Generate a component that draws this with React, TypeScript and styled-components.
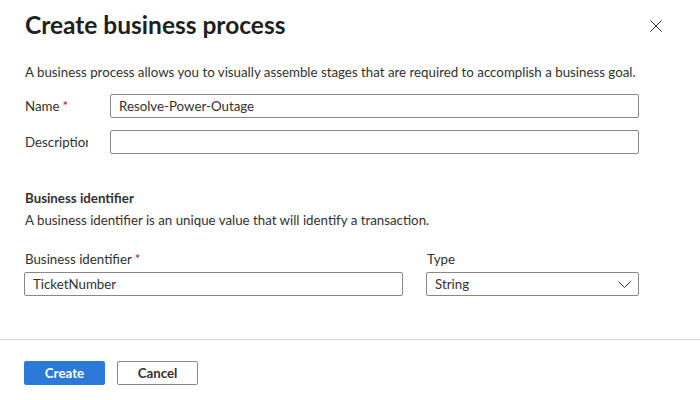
import { createGlobalStyle, styled } from "styled-components";

const GlobalStyle = createGlobalStyle`
  html, body {
    margin: 0;
    padding: 0;
    background: #ffffff;
  }
  body {
    font-family: "Segoe UI", Lato, "Noto Sans", sans-serif;
    color: #323130;
  }
`;

const Panel = styled.div`
  width: 700px;
  height: 400px;
  display: flex;
  flex-direction: column;
  background: #ffffff;
`;

const Header = styled.div`
  display: flex;
  justify-content: space-between;
  align-items: flex-start;
  height: 52px;
  padding: 9px 38px 0 25px;
  box-sizing: border-box;
`;

const Title = styled.h1`
  margin: 0;
  font-size: 24.5px;
  font-weight: 700;
  line-height: 32px;
  color: #201f1e;
`;

const CloseButton = styled.button`
  border: none;
  background: none;
  padding: 0;
  margin-top: 11px;
  width: 12px;
  height: 12px;
  display: flex;
  cursor: pointer;
`;

const Body = styled.div`
  flex: 1;
  padding: 11px 61px 0 25px;
  display: flex;
  flex-direction: column;
  font-size: 13.3px;
`;

const Intro = styled.p`
  margin: 0 0 13px;
  line-height: 18px;
  white-space: nowrap;
`;

const FieldRow = styled.div`
  display: grid;
  grid-template-columns: 85px 1fr;
  align-items: center;
  margin-right: -2px;
  margin-bottom: 12px;
  padding-right: 2px;
`;

// the reference cuts this label off at the column edge
const SideLabel = styled.label`
  width: 63px;
  overflow: hidden;
  white-space: nowrap;
`;

const Required = styled.span`
  color: #a4262c;
  margin-left: 3px;
`;

const TextBox = styled.div`
  height: 24px;
  box-sizing: border-box;
  border: 1px solid #8a8886;
  border-radius: 2px;
  display: flex;
  align-items: center;
  padding: 0 8px;
`;

const SectionTitle = styled.h2`
  margin: 22px 0 0;
  font-size: 13.3px;
  font-weight: 700;
  line-height: 20px;
`;

const SectionText = styled.p`
  margin: 3px 0 0;
  line-height: 18px;
`;

const IdGrid = styled.div`
  display: grid;
  grid-template-columns: 379px 213px;
  column-gap: 23px;
  margin: 21px 0 0 -1px;
`;

const TopLabel = styled.label`
  display: block;
  line-height: 18px;
  margin-bottom: 4px;
  padding-left: 1px;
`;

const SelectBox = styled(TextBox)`
  justify-content: space-between;
  padding-right: 7px;
`;

const Footer = styled.div`
  border-top: 1px solid #dcdcdc;
  height: 61px;
  padding: 21px 24px 0;
  box-sizing: border-box;
  display: flex;
  gap: 12px;
  align-items: flex-start;
`;

const Button = styled.button<{ $primary?: boolean }>`
  width: 81px;
  height: 24px;
  box-sizing: border-box;
  border-radius: 2px;
  font-family: "Segoe UI", Lato, "Noto Sans", sans-serif;
  font-size: 13.3px;
  font-weight: 700;
  padding: 0;
  cursor: pointer;
  border: 1px solid ${(p) => (p.$primary ? "#2b79d8" : "#8a8886")};
  background: ${(p) => (p.$primary ? "#2b79d8" : "#ffffff")};
  color: ${(p) => (p.$primary ? "#ffffff" : "#323130")};
`;

export default function App() {
  return (
    <Panel>
      <GlobalStyle />
      <Header>
        <Title>Create business process</Title>
        <CloseButton aria-label="Close">
          <svg width="12" height="12" viewBox="0 0 12 12">
            <path d="M0.5 0.5 L11.5 11.5 M11.5 0.5 L0.5 11.5" stroke="#323130" strokeWidth="1" />
          </svg>
        </CloseButton>
      </Header>
      <Body>
        <Intro>
          A business process allows you to visually assemble stages that are required to
          accomplish a business goal.
        </Intro>
        <FieldRow>
          <SideLabel>
            Name<Required>*</Required>
          </SideLabel>
          <TextBox>Resolve-Power-Outage</TextBox>
        </FieldRow>
        <FieldRow>
          <SideLabel>Description</SideLabel>
          <TextBox />
        </FieldRow>
        <SectionTitle>Business identifier</SectionTitle>
        <SectionText>
          A business identifier is an unique value that will identify a transaction.
        </SectionText>
        <IdGrid>
          <div>
            <TopLabel>
              Business identifier<Required>*</Required>
            </TopLabel>
            <TextBox>TicketNumber</TextBox>
          </div>
          <div>
            <TopLabel>Type</TopLabel>
            <SelectBox>
              String
              <svg width="13" height="7" viewBox="0 0 13 7">
                <path d="M0.5 0.5 L6.5 6.5 L12.5 0.5" fill="none" stroke="#323130" strokeWidth="1" />
              </svg>
            </SelectBox>
          </div>
        </IdGrid>
      </Body>
      <Footer>
        <Button $primary>Create</Button>
        <Button>Cancel</Button>
      </Footer>
    </Panel>
  );
}
